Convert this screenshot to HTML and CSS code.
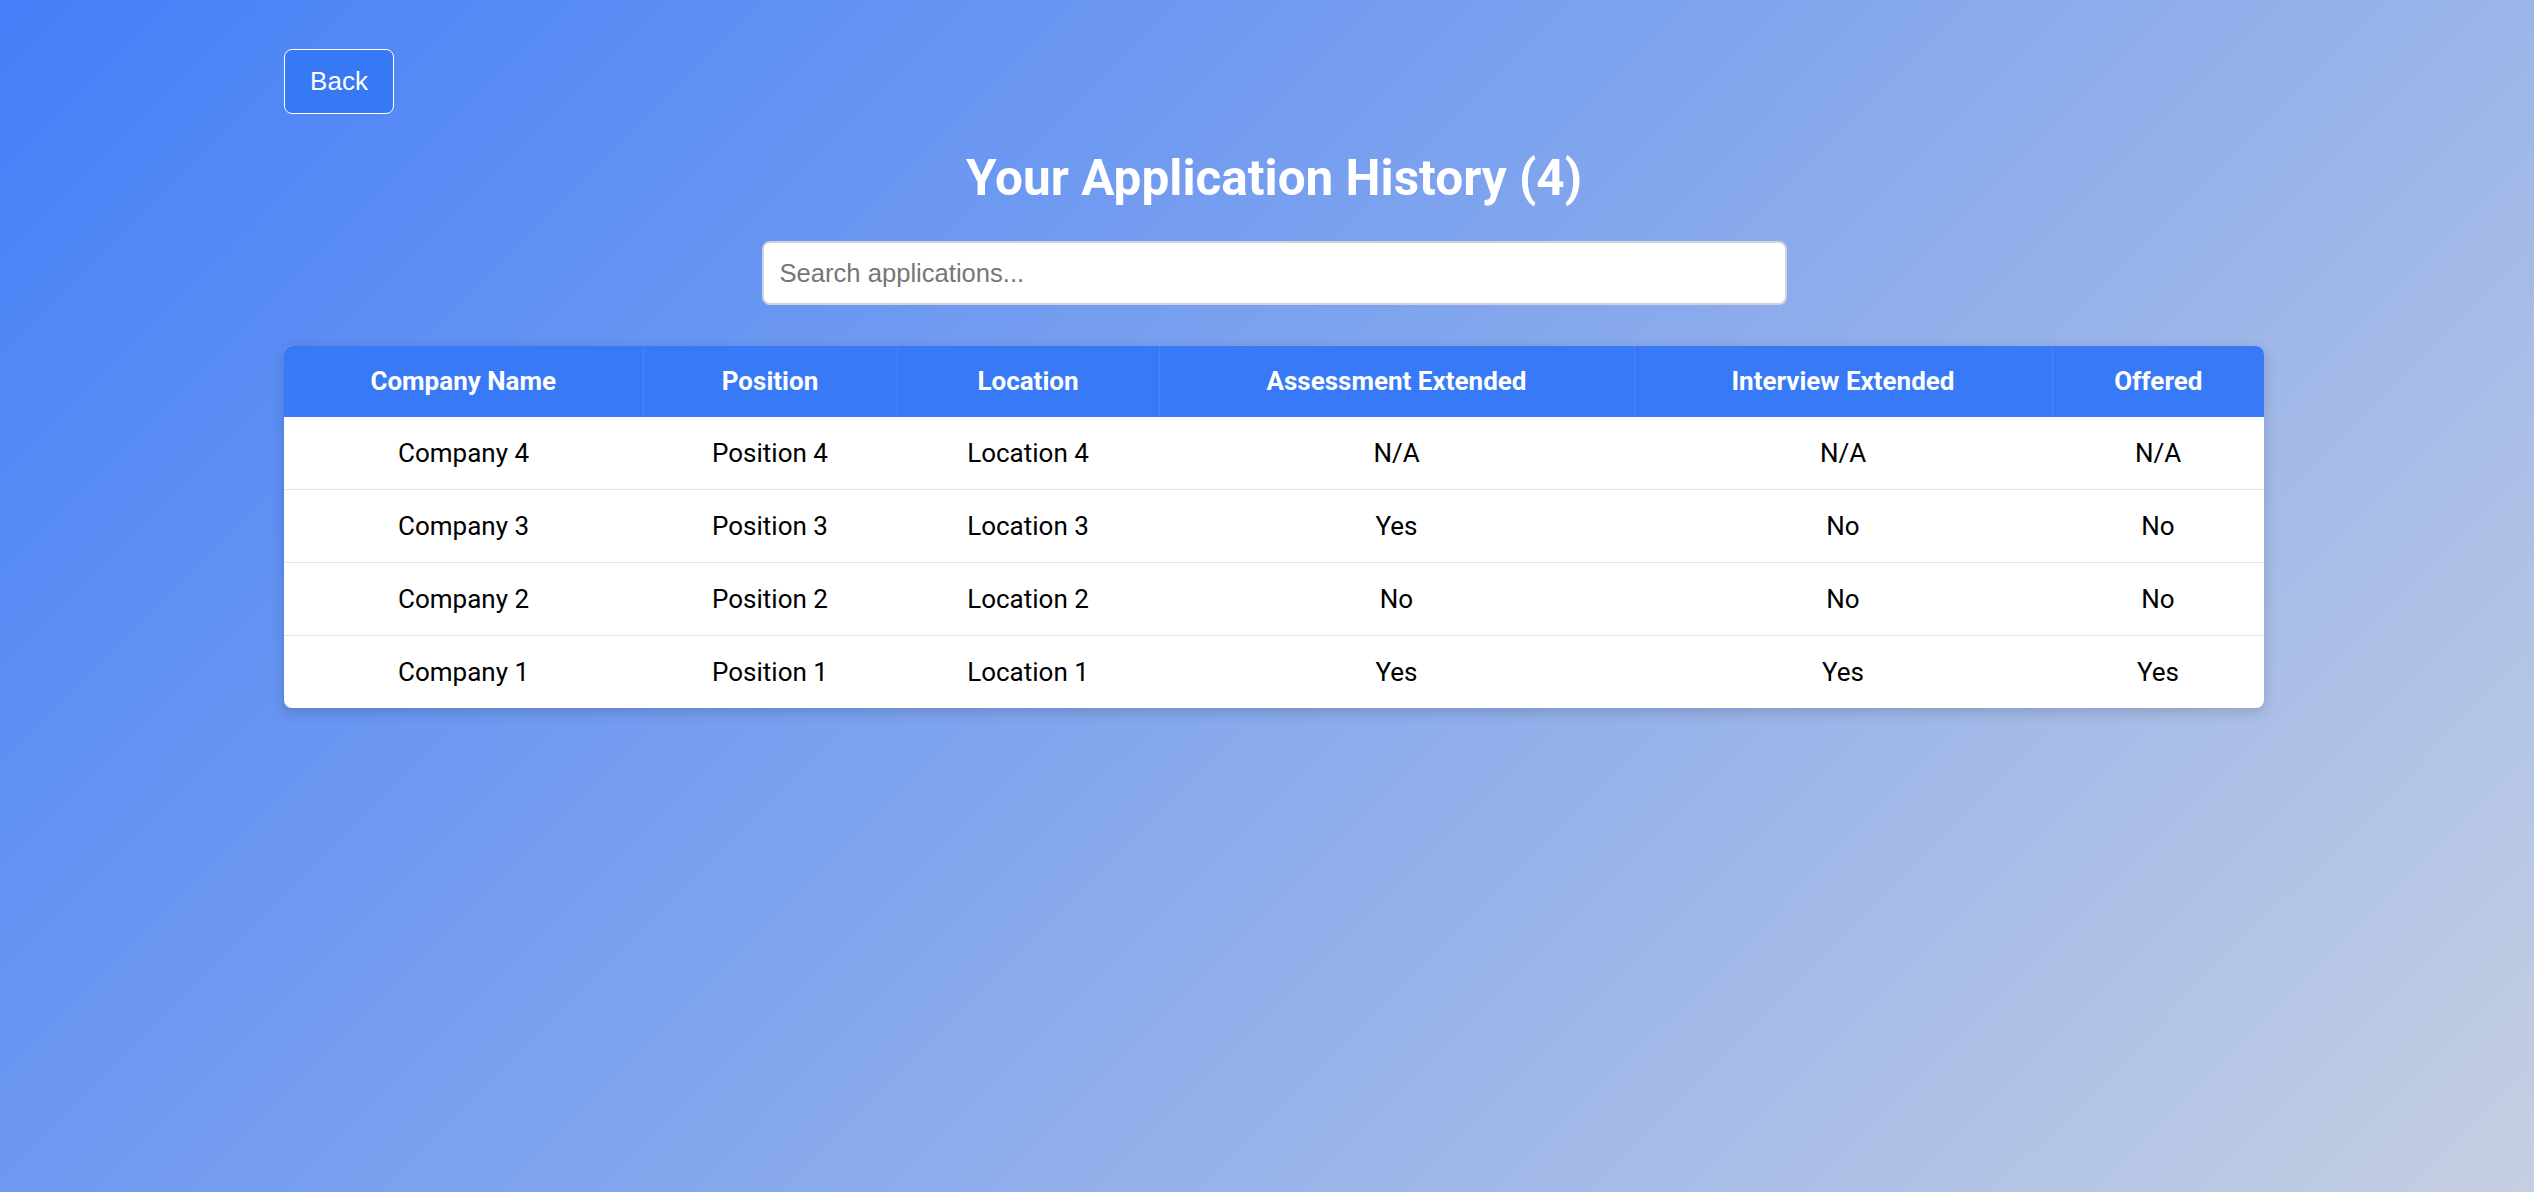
FILE: index.html
```html
<!DOCTYPE html>
<html lang="en">
<head>
<meta charset="utf-8">
<title>Application History</title>
<link rel="stylesheet" href="styles.css">
</head>
<body>
<div class="container">
  <button class="back-btn">Back</button>
  <h1 class="title">Your Application History (4)</h1>
  <div class="search-wrap">
    <input class="search" type="text" placeholder="Search applications...">
  </div>
  <div class="table-card">
    <table class="history">
      <colgroup>
        <col class="c1"><col class="c2"><col class="c3"><col class="c4"><col class="c5"><col class="c6">
      </colgroup>
      <thead>
        <tr>
          <th>Company Name</th>
          <th>Position</th>
          <th>Location</th>
          <th>Assessment Extended</th>
          <th>Interview Extended</th>
          <th>Offered</th>
        </tr>
      </thead>
      <tbody>
        <tr><td>Company 4</td><td>Position 4</td><td>Location 4</td><td>N/A</td><td>N/A</td><td>N/A</td></tr>
        <tr><td>Company 3</td><td>Position 3</td><td>Location 3</td><td>Yes</td><td>No</td><td>No</td></tr>
        <tr><td>Company 2</td><td>Position 2</td><td>Location 2</td><td>No</td><td>No</td><td>No</td></tr>
        <tr><td>Company 1</td><td>Position 1</td><td>Location 1</td><td>Yes</td><td>Yes</td><td>Yes</td></tr>
      </tbody>
    </table>
  </div>
</div>
</body>
</html>
```
FILE: styles.css
```css
html, body {
  margin: 0;
  padding: 0;
}
body {
  min-height: 100vh;
  background: linear-gradient(135deg, #447ff8 0%, #c5cfe2 100%);
  font-family: Roboto, "Liberation Sans", Arial, sans-serif;
}
.container {
  margin: 0 270px 0 284px;
  padding-top: 49px;
  display: flex;
  flex-direction: column;
}
.back-btn {
  align-self: flex-start;
  width: 110px;
  height: 65px;
  box-sizing: border-box;
  background: #3779f5;
  color: #ffffff;
  border: 1px solid #ffffff;
  border-radius: 8px;
  font-family: "Liberation Sans", Arial, sans-serif;
  font-size: 26px;
  padding: 0;
  cursor: pointer;
}
.title {
  margin: 34px 0 0 0;
  text-align: center;
  color: #ffffff;
  font-family: Roboto, sans-serif;
  font-weight: 700;
  font-size: 49.5px;
  line-height: 60px;
}
.search-wrap {
  display: flex;
  justify-content: center;
  margin-top: 33px;
}
.search {
  width: 1025px;
  height: 64px;
  box-sizing: border-box;
  border: 2px solid #cfd4dc;
  border-radius: 8px;
  padding: 0 16px;
  font-family: "Liberation Sans", Arial, sans-serif;
  font-size: 25.6px;
  color: #333;
  background: #fff;
  outline: none;
}
.search::placeholder {
  color: #767676;
}
.table-card {
  margin-top: 41px;
  border-radius: 8px;
  overflow: hidden;
  background: #ffffff;
  box-shadow: 0 4px 14px rgba(0, 0, 0, 0.16);
}
.history {
  width: 100%;
  border-collapse: collapse;
  table-layout: fixed;
}
.c1 { width: 359px; }
.c2 { width: 254px; }
.c3 { width: 262px; }
.c4 { width: 475px; }
.c5 { width: 418px; }
.c6 { width: 212px; }
.history th {
  background: #3779f6;
  color: #ffffff;
  font-weight: 700;
  font-size: 26px;
  line-height: 31px;
  padding: 20px 0;
  text-align: center;
  border-right: 1px solid rgba(255, 255, 255, 0.1);
}
.history th:last-child {
  border-right: none;
}
.history td {
  color: #000000;
  font-size: 26px;
  line-height: 30px;
  padding: 21px 0;
  text-align: center;
  border-bottom: 1px solid #e3e3e3;
}
.history tbody tr:last-child td {
  border-bottom: none;
}
```
